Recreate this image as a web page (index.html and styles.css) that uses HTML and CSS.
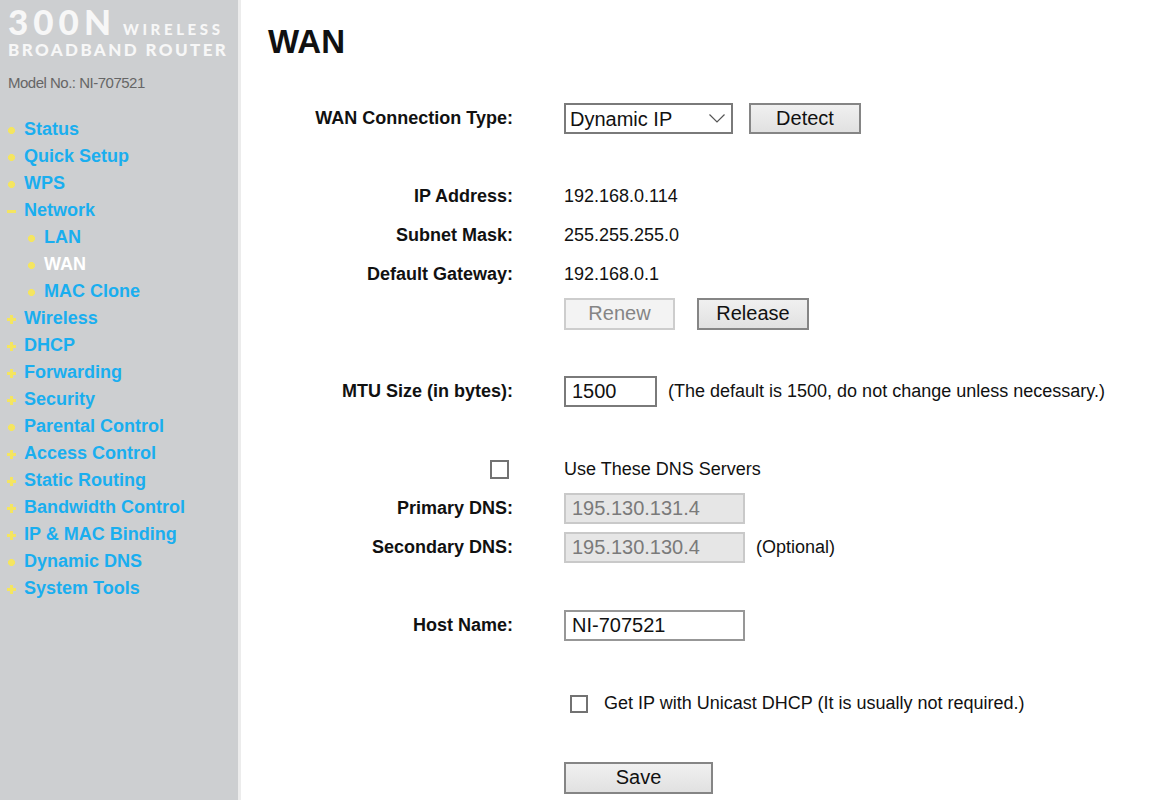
FILE: index.html
```html
<!DOCTYPE html>
<html lang="en">
<head>
    <meta charset="UTF-8">
    <title>WAN</title>
    <link rel="stylesheet" href="styles.css">
</head>
<body>
    <aside class="sidebar">
        <div class="logo">
            <div class="logo-top">
                <span class="logo-num">300N</span>
                <span class="logo-wl">WIRELESS</span>
            </div>
            <div class="logo-sub">BROADBAND ROUTER</div>
        </div>
        <p class="model">Model No.: NI-707521</p>

        <ul class="menu">
            <li><span class="mk dot"></span><a href="#">Status</a></li>
            <li><span class="mk dot"></span><a href="#">Quick Setup</a></li>
            <li><span class="mk dot"></span><a href="#">WPS</a></li>
            <li><span class="mk minus"></span><a href="#">Network</a></li>
            <li class="sub"><span class="mk dot"></span><a href="#">LAN</a></li>
            <li class="sub active"><span class="mk dot"></span><a href="#">WAN</a></li>
            <li class="sub"><span class="mk dot"></span><a href="#">MAC Clone</a></li>
            <li><span class="mk plus"></span><a href="#">Wireless</a></li>
            <li><span class="mk plus"></span><a href="#">DHCP</a></li>
            <li><span class="mk plus"></span><a href="#">Forwarding</a></li>
            <li><span class="mk plus"></span><a href="#">Security</a></li>
            <li><span class="mk dot"></span><a href="#">Parental Control</a></li>
            <li><span class="mk plus"></span><a href="#">Access Control</a></li>
            <li><span class="mk plus"></span><a href="#">Static Routing</a></li>
            <li><span class="mk plus"></span><a href="#">Bandwidth Control</a></li>
            <li><span class="mk plus"></span><a href="#">IP &amp; MAC Binding</a></li>
            <li><span class="mk dot"></span><a href="#">Dynamic DNS</a></li>
            <li><span class="mk plus"></span><a href="#">System Tools</a></li>
        </ul>
    </aside>

    <main class="content">
        <h1>WAN</h1>

        <form class="form">
            <div class="row">
                <label class="label">WAN Connection Type:</label>
                <div class="field">
                    <select class="select">
                        <option>Dynamic IP</option>
                        <option>Static IP</option>
                        <option>PPPoE</option>
                    </select>
                    <button type="button" class="btn btn-detect">Detect</button>
                </div>
            </div>
            <div class="spacer"></div>

            <div class="row">
                <span class="label">IP Address:</span>
                <span class="field">192.168.0.114</span>
            </div>
            <div class="row">
                <span class="label">Subnet Mask:</span>
                <span class="field">255.255.255.0</span>
            </div>
            <div class="row">
                <span class="label">Default Gateway:</span>
                <span class="field">192.168.0.1</span>
            </div>
            <div class="row">
                <span class="label"></span>
                <div class="field">
                    <button type="button" class="btn btn-renew" disabled>Renew</button>
                    <button type="button" class="btn btn-release">Release</button>
                </div>
            </div>
            <div class="spacer"></div>

            <div class="row">
                <label class="label">MTU Size (in bytes):</label>
                <div class="field">
                    <input type="text" class="input input-mtu" value="1500">
                    <span class="hint">(The default is 1500, do not change unless necessary.)</span>
                </div>
            </div>
            <div class="spacer"></div>

            <div class="row">
                <span class="label"><input type="checkbox" class="check check-dns"></span>
                <span class="field">Use These DNS Servers</span>
            </div>
            <div class="row">
                <label class="label">Primary DNS:</label>
                <div class="field">
                    <input type="text" class="input input-wide" value="195.130.131.4" disabled>
                </div>
            </div>
            <div class="row">
                <label class="label">Secondary DNS:</label>
                <div class="field">
                    <input type="text" class="input input-wide" value="195.130.130.4" disabled>
                    <span class="hint">(Optional)</span>
                </div>
            </div>
            <div class="spacer"></div>

            <div class="row">
                <label class="label">Host Name:</label>
                <div class="field">
                    <input type="text" class="input input-wide input-host" value="NI-707521">
                </div>
            </div>
            <div class="spacer"></div>

            <div class="row">
                <span class="label"></span>
                <div class="field">
                    <input type="checkbox" class="check check-unicast">
                    <span>Get IP with Unicast DHCP (It is usually not required.)</span>
                </div>
            </div>
            <div class="spacer short"></div>

            <div class="row">
                <span class="label"></span>
                <div class="field">
                    <button type="button" class="btn btn-save">Save</button>
                </div>
            </div>
        </form>
    </main>
</body>
</html>
```

FILE: styles.css
```css
:root {
    --cinza: #cdcfd1;
    --azul: #1aaeef;
    --amarelo: #f4e560;
    --borda: #7a7a7a;
}

body {
    margin: 0;
    font-family: "Liberation Sans", Arial, sans-serif;
    color: #111;
    display: flex;
    min-height: 100vh;
    background-color: white;
}

/* barra lateral */
.sidebar {
    width: 238px;
    flex-shrink: 0;
    background-color: var(--cinza);
    border-right: 3px solid #ececec;
}

.logo {
    padding: 3px 0 0 8px;
    color: #f7f7f7;
    font-family: Lato, "Open Sans", sans-serif;
    font-weight: 900;
    white-space: nowrap;
}

.logo-top {
    display: flex;
    align-items: baseline;
    height: 36px;
}

.logo-num {
    font-size: 35px;
    letter-spacing: 5px;
    line-height: 36px;
}

.logo-wl {
    font-size: 15px;
    letter-spacing: 3.6px;
    margin-left: 7px;
}

.logo-sub {
    font-size: 17px;
    letter-spacing: 2.4px;
    line-height: 22px;
}

.model {
    margin: 13px 0 0 8px;
    font-size: 15px;
    letter-spacing: -0.5px;
    color: #666;
}

.menu {
    list-style: none;
    margin: 25px 0 0 0;
    padding: 0;
}

.menu li {
    display: flex;
    align-items: center;
    height: 27px;
}

.menu li.sub {
    padding-left: 20px;
}

.menu a {
    color: var(--azul);
    font-size: 18px;
    font-weight: bold;
    text-decoration: none;
}

.menu li.active a {
    color: white;
}

.mk {
    width: 9px;
    height: 9px;
    margin: 2px 8px 0 7px;
}

.dot {
    background: radial-gradient(circle, var(--amarelo) 3.2px, transparent 3.8px);
}

.plus {
    background:
        linear-gradient(var(--amarelo), var(--amarelo)) center / 9px 3px no-repeat,
        linear-gradient(var(--amarelo), var(--amarelo)) center / 3px 9px no-repeat;
}

.minus {
    background: linear-gradient(var(--amarelo), var(--amarelo)) center / 9px 3px no-repeat;
}

/* conteudo */
.content {
    flex: 1;
    padding: 25px 0 0 27px;
}

h1 {
    margin: 0;
    font-size: 33px;
    line-height: 33px;
    font-weight: bold;
}

.form {
    margin-top: 41px;
}

.row {
    display: grid;
    grid-template-columns: 245px auto;
    column-gap: 51px;
    align-items: center;
    height: 39px;
    font-size: 18px;
}

.spacer {
    height: 39px;
}

.spacer.short {
    height: 35px;
}

.label {
    text-align: right;
    font-weight: bold;
    display: flex;
    justify-content: flex-end;
    align-items: center;
}

.field {
    display: flex;
    align-items: center;
}

.select,
.input,
.btn {
    font-family: "Liberation Sans", Arial, sans-serif;
    font-size: 20px;
    height: 31px;
    box-sizing: border-box;
    margin: 0;
}

.select {
    appearance: none;
    width: 169px;
    padding: 0 0 0 4px;
    border: 2px solid var(--borda);
    border-radius: 0;
    color: #111;
    background: white url("data:image/svg+xml;utf8,<svg xmlns='http://www.w3.org/2000/svg' width='16' height='9'><path d='M0.5 0.5 L8 8 L15.5 0.5' fill='none' stroke='%23555' stroke-width='1.2'/></svg>") no-repeat right 6px center;
}

.btn {
    border: 2px solid #858585;
    background: linear-gradient(#f0f0f0, #e1e1e1);
    color: #111;
    padding: 0;
    border-radius: 0;
}

.btn-detect {
    width: 112px;
    margin-left: 16px;
}

.btn-renew {
    width: 111px;
    height: 32px;
    border-color: #cdcdcd;
    background: #f3f3f3;
    color: #858585;
}

.btn-release {
    width: 112px;
    height: 32px;
    margin-left: 22px;
}

.btn-save {
    width: 149px;
    height: 32px;
}

.input {
    border: 2px solid var(--borda);
    padding: 0 6px;
    color: #111;
    background-color: white;
}

.input-mtu {
    width: 93px;
}

.input-wide {
    width: 181px;
}

.input-host {
    border-color: #979797;
}

.input:disabled {
    background-color: #e6e6e6;
    border-color: #c9c9c9;
    color: #7a7a7a;
}

.hint {
    margin-left: 11px;
}

.check {
    appearance: none;
    width: 19px;
    height: 19px;
    margin: 0;
    border: 2px solid #727272;
    background-color: white;
}

.check-dns {
    margin-right: 4px;
}

.check-unicast {
    width: 18px;
    height: 18px;
    margin: 0 16px 0 6px;
}
```
